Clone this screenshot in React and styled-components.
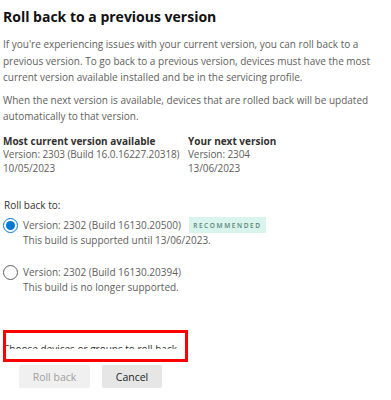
import React from 'react';
import styled, { createGlobalStyle } from 'styled-components';

const GlobalStyle = createGlobalStyle`
  body {
    margin: 0;
    background: #ffffff;
    font-family: "Open Sans", "Noto Sans", sans-serif;
  }
`;

const options = [
  {
    id: '20500',
    label: 'Version: 2302 (Build 16130.20500)',
    note: 'This build is supported until 13/06/2023.',
    recommended: true,
    checked: true,
  },
  {
    id: '20394',
    label: 'Version: 2302 (Build 16130.20394)',
    note: 'This build is no longer supported.',
  },
];

const App = () => {
  return (
    <Page>
      <GlobalStyle />
      <Title>Roll back to a previous version</Title>
      <Paragraph>
        If you're experiencing issues with your current version, you can roll back to a
        previous version. To go back to a previous version, devices must have the most
        current version available installed and be in the servicing profile.
      </Paragraph>
      <Paragraph $gap={6}>
        When the next version is available, devices that are rolled back will be updated
        automatically to that version.
      </Paragraph>

      <VersionGrid>
        <VersionColumn>
          <Label>Most current version available</Label>
          <Value>Version: 2303 (Build 16.0.16227.20318)</Value>
          <Value>10/05/2023</Value>
        </VersionColumn>
        <VersionColumn>
          <Label>Your next version</Label>
          <Value>Version: 2304</Value>
          <Value>13/06/2023</Value>
        </VersionColumn>
      </VersionGrid>

      <RollLabel>Roll back to:</RollLabel>
      <Options>
        {options.map((opt) => (
          <Option key={opt.id}>
            <RadioRow>
              <Radio $checked={opt.checked} />
              <OptionText>{opt.label}</OptionText>
              {opt.recommended && <Badge>RECOMMENDED</Badge>}
            </RadioRow>
            <Note>{opt.note}</Note>
          </Option>
        ))}
      </Options>

      <Highlight>
        <Clip>
          <DeviceLink>Choose devices or groups to roll back ⌄</DeviceLink>
        </Clip>
      </Highlight>

      <Actions>
        <Button disabled $w={71}>Roll back</Button>
        <Button $w={60}>Cancel</Button>
      </Actions>
    </Page>
  );
};

// Styled Components
const Page = styled.div`
  width: 391px;
  height: 400px;
  padding: 7px 0 0 3px;
  box-sizing: border-box;
  overflow: hidden;
`;

const Title = styled.h1`
  margin: 0;
  font-size: 14px;
  line-height: 20px;
  font-weight: 700;
  color: #111111;
`;

const Paragraph = styled.p`
  margin: ${(p) => (p.$gap ? `${p.$gap}px` : '9px')} 0 0;
  width: 370px;
  font-size: 10px;
  line-height: 16.5px;
  color: #605e5c;
`;

const VersionGrid = styled.div`
  display: grid;
  grid-template-columns: 185px 1fr;
  margin-top: 10px;
`;

const VersionColumn = styled.div`
  display: flex;
  flex-direction: column;
`;

const Label = styled.div`
  font-size: 10px;
  line-height: 13.5px;
  font-weight: 700;
  color: #323130;
`;

const Value = styled.div`
  font-size: 10px;
  line-height: 13.5px;
  color: #605e5c;
  white-space: nowrap;
  letter-spacing: -0.1px;
`;

const RollLabel = styled.div`
  margin: 23px 0 0 1px;
  font-size: 10px;
  line-height: 14px;
  color: #323130;
`;

const Options = styled.div`
  display: flex;
  flex-direction: column;
  gap: 17px;
  margin-top: 5px;
`;

const Option = styled.div`
  display: flex;
  flex-direction: column;
`;

const RadioRow = styled.div`
  display: flex;
  align-items: center;
  height: 16px;
`;

const Radio = styled.span`
  width: 15px;
  height: 15px;
  box-sizing: border-box;
  border-radius: 50%;
  border: 1px solid ${(p) => (p.$checked ? '#0078d4' : '#605e5c')};
  display: flex;
  align-items: center;
  justify-content: center;
  flex-shrink: 0;
  &::after {
    content: '';
    display: ${(p) => (p.$checked ? 'block' : 'none')};
    width: 9px;
    height: 9px;
    border-radius: 50%;
    background: #0078d4;
  }
`;

const OptionText = styled.span`
  margin-left: 5px;
  font-size: 10px;
  color: #605e5c;
`;

const Badge = styled.span`
  margin-left: 8px;
  height: 16px;
  width: 77px;
  display: flex;
  align-items: center;
  justify-content: center;
  background: #d8f4ec;
  color: #5b8378;
  font-size: 6.5px;
  letter-spacing: 1.6px;
  font-weight: 600;
`;

const Note = styled.div`
  padding-left: 20px;
  font-size: 10px;
  line-height: 14px;
  color: #605e5c;
`;

const Highlight = styled.div`
  margin-top: 36px;
  width: 185px;
  height: 32px;
  box-sizing: border-box;
  border: 3px solid #ff0000;
  overflow: hidden;
`;

const Clip = styled.div`
  height: 16px;
  overflow: hidden;
`;

const DeviceLink = styled.div`
  margin: 8px 0 0 -3px;
  white-space: nowrap;
  font-size: 10px;
  line-height: 16px;
  color: #323130;
`;

const Actions = styled.div`
  display: flex;
  gap: 12px;
  margin: 3px 0 0 16px;
`;

const Button = styled.button`
  width: ${(p) => p.$w}px;
  height: 23px;
  border: none;
  border-radius: 2px;
  padding: 0;
  font-family: inherit;
  font-size: 10.5px;
  background: ${(p) => (p.disabled ? '#f0f0f0' : '#e6e6e6')};
  color: ${(p) => (p.disabled ? '#a19f9d' : '#201f1e')};
  cursor: ${(p) => (p.disabled ? 'default' : 'pointer')};
`;

export default App;
